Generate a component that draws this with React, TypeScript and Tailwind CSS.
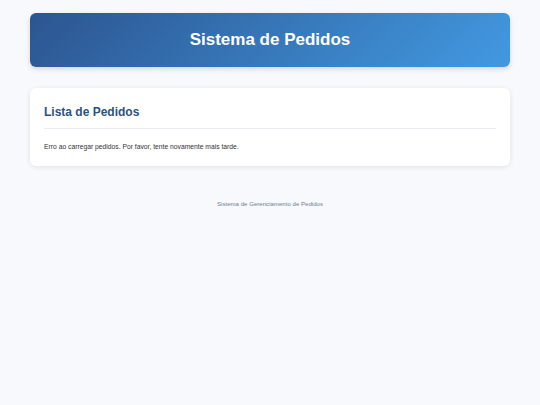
export default function App() {
  return (
    <div className="min-h-screen bg-[#f7f9fc] font-['Liberation_Sans',Arial,sans-serif] text-[#333]">
      <div className="mx-auto max-w-[480px] pt-[13px]">
        <header className="h-[54px] rounded-[6px] bg-[linear-gradient(135deg,#2c5590,#4299e1)] shadow-[0_2px_5px_rgba(0,0,0,0.15)] flex items-center justify-center">
          <h1 className="text-[17px] font-bold text-white">Sistema de Pedidos</h1>
        </header>

        <main className="mt-[21px] rounded-[6px] bg-white px-[14px] pt-[18px] pb-[15px] shadow-[0_1px_5px_rgba(0,0,0,0.1)]">
          <h2 className="text-[12px] font-bold text-[#2c5282] leading-none">Lista de Pedidos</h2>
          <div className="mt-[10px] border-t border-[#e8ecf0]" />
          <p className="mt-[15px] text-[6.75px] leading-none text-[#333]">
            Erro ao carregar pedidos. Por favor, tente novamente mais tarde.
          </p>
        </main>

        <footer className="mt-[33px] text-center text-[6.1px] text-[#718096]">
          Sistema de Gerenciamento de Pedidos
        </footer>
      </div>
    </div>
  );
}
